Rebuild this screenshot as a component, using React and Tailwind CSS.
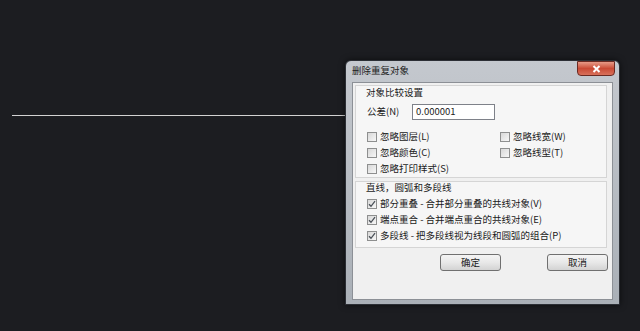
const font = { fontFamily: '"Noto Sans CJK SC", "Liberation Sans", sans-serif' }

function Box({ checked }) {
  return (
    <span className="w-[10px] h-[10px] shrink-0 border border-[#8e8f8f] bg-gradient-to-br from-[#d8d8d8] to-[#f7f7f7] flex items-center justify-center">
      {checked && (
        <svg width="8" height="8" viewBox="0 0 8 8">
          <path d="M1 4.2 L3 6.3 L7 1.2" fill="none" stroke="#4a5058" strokeWidth="1.3" />
        </svg>
      )}
    </span>
  )
}

function Check({ label, checked }) {
  return (
    <div className="flex items-center gap-[3px] h-[16px]">
      <Box checked={checked} />
      <span className="leading-none">{label}</span>
    </div>
  )
}

function Btn({ children }) {
  return (
    <button className="w-[61px] h-[17px] rounded-[3px] border border-[#707070] bg-gradient-to-b from-[#f4f4f4] via-[#e8e8e8] to-[#d3d3d3] text-[9.5px] leading-none text-[#1a1a1a] flex items-center justify-center">
      {children}
    </button>
  )
}

export default function App() {
  return (
    <div className="w-[640px] h-[331px] bg-[#1c1d21] flex pt-[60px] pl-[12px] overflow-hidden" style={font}>
      {/* 绘图区里的直线 */}
      <div className="w-[333px] h-px mt-[55px] bg-[#d2d2d2]" />

      {/* 对话框 */}
      <div className="w-[275px] h-[245px] border border-[#2c2f35] rounded-t-[6px] bg-gradient-to-b from-[#c4c8ce] to-[#aab0b7] flex flex-col shadow-[0_0_6px_rgba(0,0,0,0.6)]">
        <div className="h-[21px] flex items-start relative">
          <span className="ml-[6px] mt-[5px] text-[9.5px] leading-none text-[#222]">删除重复对象</span>
          <div className="ml-auto mr-[4px] w-[38px] h-[15px] rounded-b-[4px] border border-[#6b2a22] bg-gradient-to-b from-[#e69a88] via-[#c94a35] to-[#d8705a] flex items-center justify-center">
            <svg width="9" height="8" viewBox="0 0 9 8">
              <path d="M1.5 1 L7.5 7 M7.5 1 L1.5 7" stroke="#fff" strokeWidth="2" />
            </svg>
          </div>
        </div>

        <div className="mx-[6px] h-[218px] border border-[#8c9096] bg-[#f0f0f0] flex flex-col text-[9.5px] text-[#1a1a1a]">
          {/* 对象比较设置 */}
          <div className="ml-[2px] mr-[5px] mt-[2px] h-[93px] border border-[#d5d5d5] bg-[#f6f6f6] flex flex-col">
            <span className="ml-[10px] mt-[2px] leading-none">对象比较设置</span>
            <div className="flex items-center ml-[11px] mt-[6px]">
              <span className="w-[45px] leading-none">公差(N)</span>
              <div className="w-[83px] h-[16px] border border-[#7e8189] bg-white flex items-center pl-[3px] leading-none">0.000001</div>
            </div>
            <div className="flex ml-[11px] mt-[9px]">
              <div className="w-[133px] flex flex-col">
                <Check label="忽略图层(L)" />
                <Check label="忽略颜色(C)" />
                <Check label="忽略打印样式(S)" />
              </div>
              <div className="flex flex-col">
                <Check label="忽略线宽(W)" />
                <Check label="忽略线型(T)" />
              </div>
            </div>
          </div>

          {/* 直线、圆弧和多段线 */}
          <div className="ml-[2px] mr-[5px] mt-[3px] h-[67px] border border-[#d5d5d5] bg-[#f6f6f6] flex flex-col">
            <span className="ml-[10px] mt-[1px] leading-none">直线，圆弧和多段线</span>
            <div className="ml-[11px] mt-[3px] flex flex-col">
              <Check checked label="部分重叠 - 合并部分重叠的共线对象(V)" />
              <Check checked label="端点重合 - 合并端点重合的共线对象(E)" />
              <Check checked label="多段线 - 把多段线视为线段和圆弧的组合(P)" />
            </div>
          </div>

          <div className="flex pl-[87px] gap-[46px] mt-[6px]">
            <Btn>确定</Btn>
            <Btn>取消</Btn>
          </div>
        </div>
      </div>
    </div>
  )
}
